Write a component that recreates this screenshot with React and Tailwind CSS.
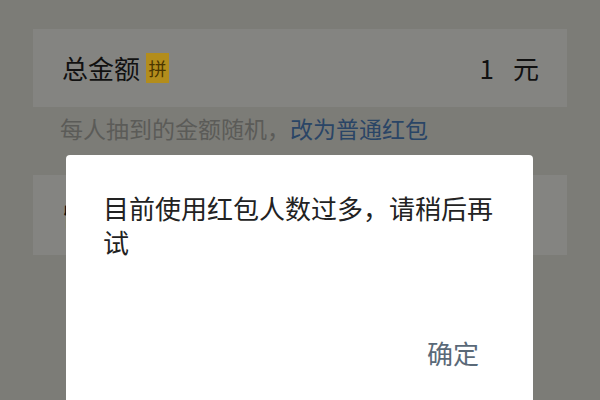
import React from "react";

const cjk = { fontFamily: '"Noto Sans CJK SC", "Noto Sans", sans-serif' };

export default function App() {
  return (
    <div
      className="relative w-[600px] h-[400px] overflow-hidden bg-[#7c7c77]"
      style={cjk}
    >
      {/* dimmed page behind the dialog */}
      <div className="pt-[29px] px-[33px]">
        <div className="h-[78px] bg-[#848481] flex items-center justify-between pl-[29px] pr-[28px]">
          <div className="flex items-center">
            <span className="text-[26px] leading-none text-[#111]">总金额</span>
            <span className="ml-[6px] w-[23px] h-[30px] bg-[#b38d1c] text-[#4a3500] text-[18px] leading-[30px] text-center">
              拼
            </span>
          </div>
          <div className="text-[26px] leading-none text-[#111]">
            1<span className="ml-[19px]">元</span>
          </div>
        </div>
        <div className="mt-[6px] pl-[27px] text-[23px] leading-[30px] text-[#5b5b58]">
          每人抽到的金额随机，<span className="text-[#2a4566]">改为普通红包</span>
        </div>
        <div className="mt-[32px] h-[80px] bg-[#848481] flex items-center pl-[29px]">
          <span className="text-[26px] leading-none text-[#111]">留言</span>
        </div>
      </div>

      {/* dialog */}
      <div className="absolute left-[66px] top-[155px] w-[467px] h-[260px] bg-white rounded-[4px] pt-[36px] px-[37px]">
        <p className="text-[26px] leading-[34px] text-[#222]">
          目前使用红包人数过多，请稍后再试
        </p>
        <div className="mt-[77px] flex justify-end pr-[17px]">
          <span className="text-[26px] leading-[34px] text-[#5a6978]">确定</span>
        </div>
      </div>
    </div>
  );
}
